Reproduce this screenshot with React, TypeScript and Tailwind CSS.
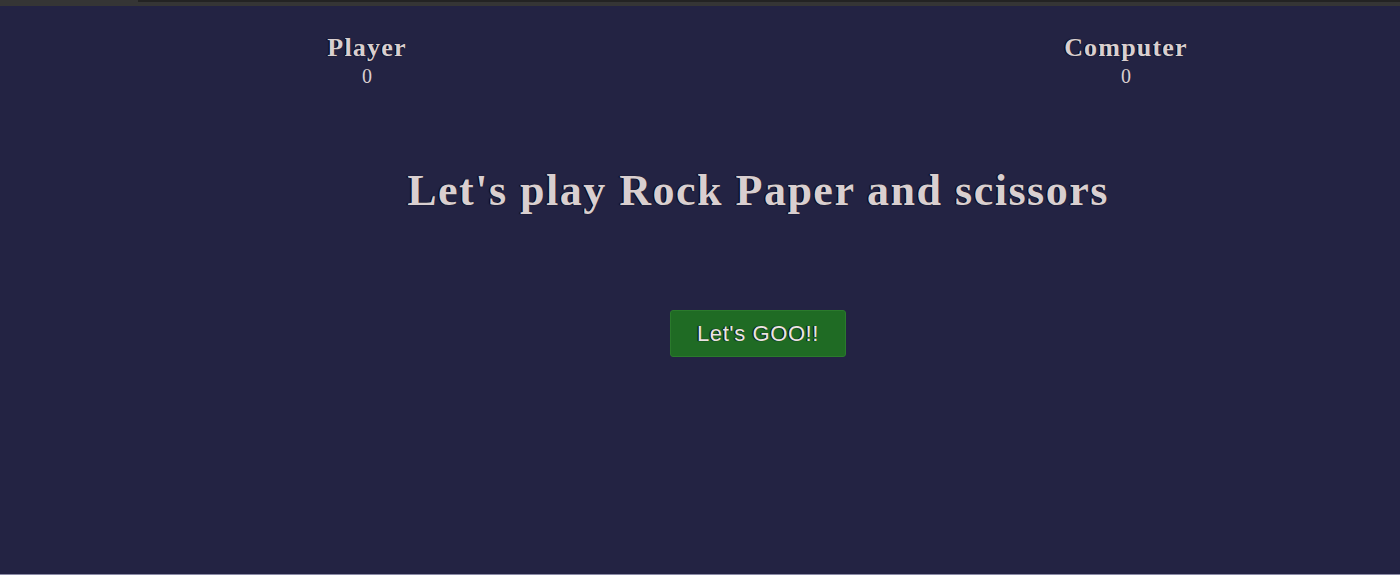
export default function App() {
  return (
    <div className="h-[579px] w-full flex flex-col bg-white overflow-hidden">
      {/* browser chrome strip */}
      <div className="h-[6px] flex flex-col bg-[#353535]">
        <div className="h-[2px] ml-[138px] bg-[#232323]"></div>
      </div>

      <main
        className="flex-1 flex flex-col bg-[#232343] text-[#d9cfd0]"
        style={{ fontFamily: "'Liberation Serif', 'Times New Roman', serif" }}
      >
        {/* Scores */}
        <div className="flex justify-between pl-[267px] pr-[174px] pt-[27px]">
          <div className="w-[200px] text-center">
            <div className="text-[26px] leading-[30px] font-bold tracking-[1.2px] [text-shadow:-1px_0_1px_#000]">Player</div>
            <div className="mt-[1px] text-[20px] leading-[24px]">0</div>
          </div>
          <div className="w-[200px] text-center">
            <div className="text-[26px] leading-[30px] font-bold tracking-[1.2px] [text-shadow:-1px_0_1px_#000]">Computer</div>
            <div className="mt-[1px] text-[20px] leading-[24px]">0</div>
          </div>
        </div>

        {/* Title */}
        <h1 className="mt-[77px] pl-[116px] text-center text-[44px] leading-[52px] font-bold tracking-[1.5px] [text-shadow:-1px_0_1px_#000]">
          Let's play Rock Paper and scissors
        </h1>

        {/* Start button */}
        <div className="mt-[93px] pl-[116px] flex justify-center">
          <button
            className="w-[176px] h-[47px] rounded-[3px] bg-[#1f6b24] border border-[#2a7a2c] text-[#ece4e4] text-[22px] tracking-[0.6px] [text-shadow:-1px_0_1px_#000]"
            style={{ fontFamily: "'Liberation Sans', Arial, sans-serif" }}
          >
            Let's GOO!!
          </button>
        </div>
      </main>

      <div className="h-[1px] bg-[#8a8aa6]"></div>
      <div className="h-[4px] bg-white"></div>
    </div>
  )
}
